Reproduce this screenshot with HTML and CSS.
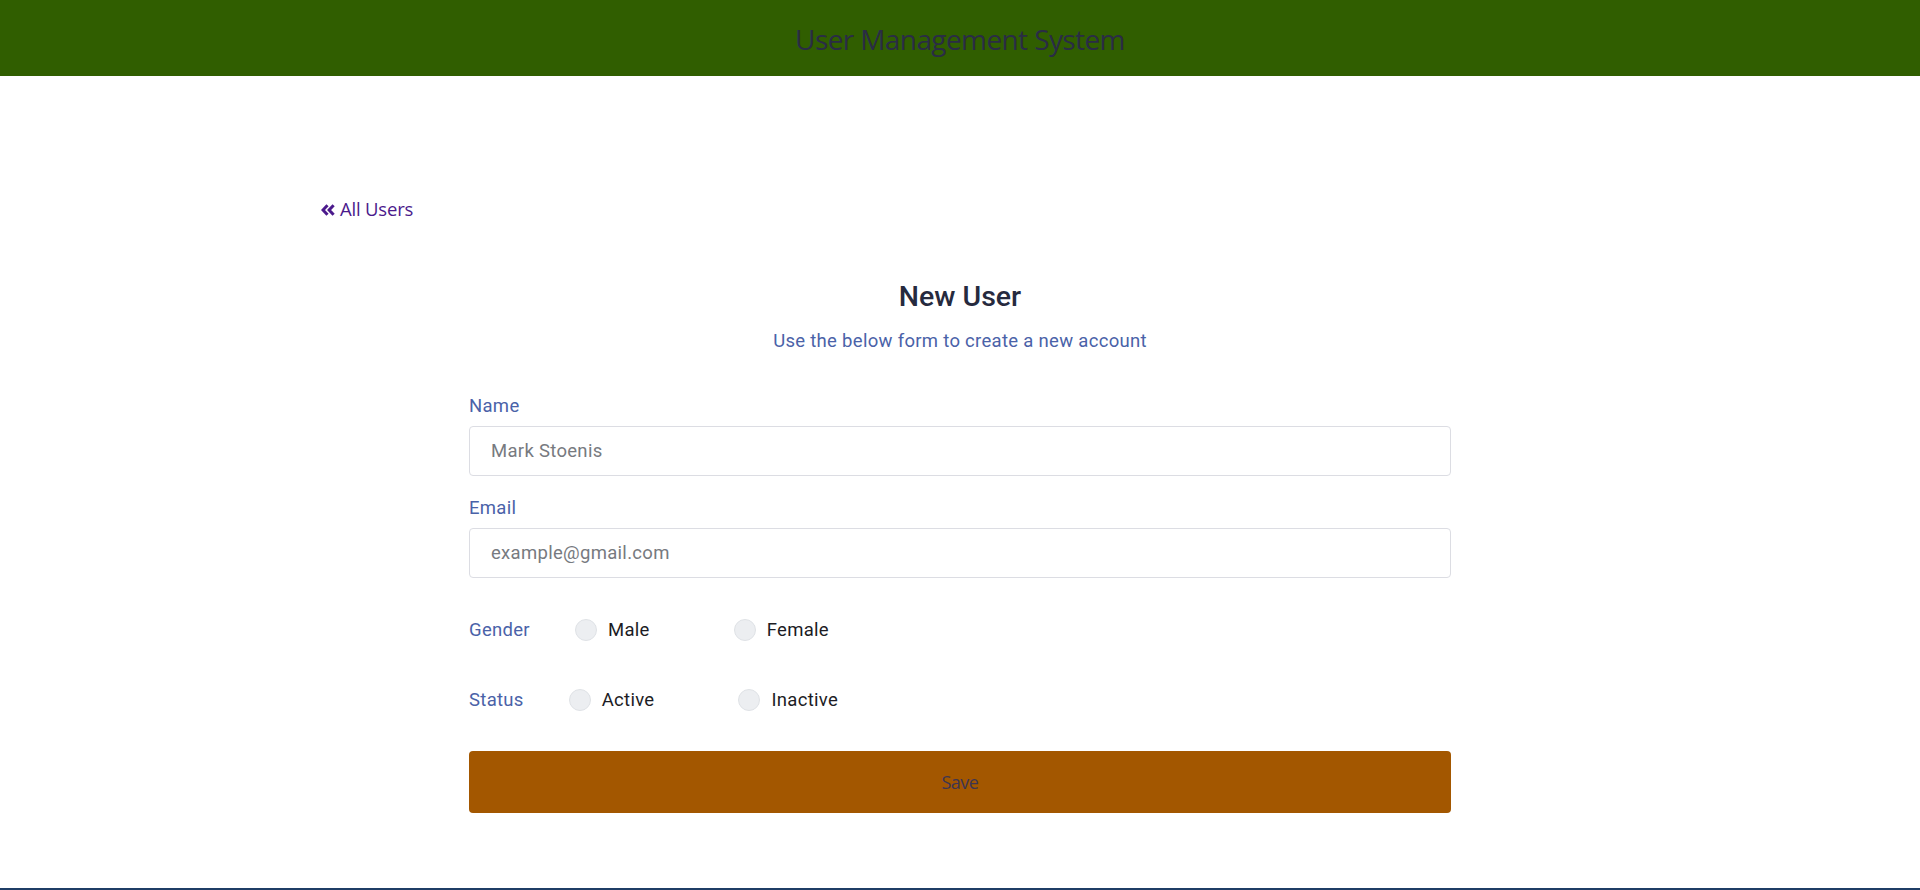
FILE: index.html
```html
<!DOCTYPE html>
<html lang="en">
<head>
<meta charset="utf-8">
<title>User Management System</title>
<link rel="stylesheet" href="styles.css">
</head>
<body>
<header class="topbar">
  <h1 class="brand">User Management System</h1>
</header>
<main class="page">
  <div class="container">
    <a class="back" href="#"><svg class="back-icon" viewBox="0 0 14 12" width="14" height="12"><path d="M6.5 1.2 L2 6 L6.5 10.8 M12.6 1.2 L8.1 6 L12.6 10.8" fill="none" stroke="currentColor" stroke-width="3" stroke-linejoin="miter"/></svg>All Users</a>
    <section class="form-wrap">
      <h2 class="title">New User</h2>
      <p class="subtitle">Use the below form to create a new account</p>
      <form class="form">
        <div class="field">
          <label class="label" for="name">Name</label>
          <input class="input" id="name" type="text" placeholder="Mark Stoenis">
        </div>
        <div class="field field-email">
          <label class="label" for="email">Email</label>
          <input class="input" id="email" type="email" placeholder="example@gmail.com">
        </div>
        <div class="radio-row row-gender">
          <span class="label row-label">Gender</span>
          <label class="option"><input class="radio" type="radio" name="gender"><span>Male</span></label>
          <label class="option"><input class="radio" type="radio" name="gender"><span>Female</span></label>
        </div>
        <div class="radio-row row-status">
          <span class="label row-label">Status</span>
          <label class="option"><input class="radio" type="radio" name="status"><span>Active</span></label>
          <label class="option"><input class="radio" type="radio" name="status"><span>Inactive</span></label>
        </div>
        <button class="save" type="button">Save</button>
      </form>
    </section>
  </div>
</main>
<footer class="footer"></footer>
</body>
</html>
```
FILE: styles.css
```css
* { box-sizing: border-box; }
html, body { margin: 0; padding: 0; }
body {
  font-family: Roboto, "Liberation Sans", sans-serif;
  background: #ffffff;
  color: #222;
}
.topbar {
  height: 76px;
  background: #305e00;
  display: flex;
  align-items: center;
  justify-content: center;
}
.brand {
  margin: 0;
  font-family: "Open Sans", sans-serif;
  font-weight: 400;
  font-size: 28px;
  letter-spacing: -0.6px;
  color: #2a2c45;
  line-height: 1;
  padding-top: 2px;
}
.page {
  min-height: 812px;
}
.container {
  width: 1278px;
  margin: 0 auto;
  padding-top: 121px;
}
.back {
  display: inline-flex;
  align-items: center;
  gap: 5px;
  font-family: "Open Sans", sans-serif;
  font-size: 18.5px;
  line-height: 24px;
  letter-spacing: -0.2px;
  color: #4b1a8c;
  text-decoration: none;
}
.back-icon { margin-top: 1px; }
.form-wrap {
  width: 982px;
  margin: 59px auto 0;
}
.title {
  margin: 0;
  text-align: center;
  font-size: 28.5px;
  font-weight: 500;
  line-height: 34px;
  color: #262a3e;
}
.subtitle {
  margin: 15px 0 0;
  text-align: center;
  font-size: 18.5px;
  letter-spacing: 0.3px;
  line-height: 24px;
  color: #4a62a8;
}
.form { margin-top: 41px; }
.field { display: flex; flex-direction: column; }
.field-email { margin-top: 20px; }
.label {
  font-size: 18.5px;
  letter-spacing: 0.3px;
  line-height: 24px;
  color: #4a62a8;
}
.input {
  margin-top: 8px;
  height: 50px;
  border: 1px solid #dcdde3;
  border-radius: 4px;
  padding: 0 21px;
  font-family: Roboto, sans-serif;
  font-size: 18.5px;
  letter-spacing: 0.3px;
  color: #333;
  background: #fff;
}
.input::placeholder { color: #777a80; }
.radio-row {
  display: flex;
  align-items: center;
  height: 24px;
}
.row-gender { margin-top: 40px; }
.row-status { margin-top: 46px; }
.row-label { margin-right: 45px; }
.option {
  display: flex;
  align-items: center;
  gap: 11px;
  margin-right: 84px;
  font-size: 18.5px;
  letter-spacing: 0.3px;
  color: #1c1c24;
}
.radio {
  appearance: none;
  -webkit-appearance: none;
  margin: 0;
  width: 22px;
  height: 22px;
  border-radius: 50%;
  background: #eceef1;
  border: 1px solid #dfe2e6;
}
.save {
  display: block;
  width: 100%;
  margin-top: 39px;
  height: 62px;
  border: none;
  border-radius: 4px;
  background: #a35700;
  color: #3d3552;
  font-family: "Open Sans", sans-serif;
  font-size: 18px;
  letter-spacing: -0.5px;
}
.footer {
  height: 40px;
  background: #1f3e66;
}
```
